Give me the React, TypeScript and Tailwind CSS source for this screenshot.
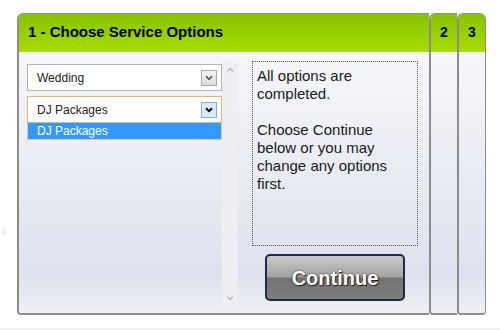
const font = "font-['Liberation_Sans',Arial,sans-serif]";

function Chevron({ bold }: { bold?: boolean }) {
  return (
    <svg width="8" height="6" viewBox="0 0 8 6">
      <path d="M1 1.2 L4 4.2 L7 1.2" stroke={bold ? "#000" : "#444"} strokeWidth={bold ? 2 : 1.6} fill="none" />
    </svg>
  );
}

function Select({ label, active }: { label: string; active?: boolean }) {
  return (
    <div
      className={
        "flex h-[27px] items-center justify-between bg-white pl-[9px] pr-[4px] text-[12px] text-[#222] border " +
        (active ? "border-[#e2b873]" : "border-[#b4b4b4]")
      }
    >
      <span>{label}</span>
      <div
        className={
          "flex h-[16px] w-[16px] items-center justify-center border " +
          (active ? "border-[#7eaee0] bg-[#dcebfc]" : "border-[#a8a8a8] bg-gradient-to-b from-[#f4f4f4] to-[#dcdcdc]")
        }
      >
        <Chevron bold={active} />
      </div>
    </div>
  );
}

function Tab({ n, last }: { n: string; last?: boolean }) {
  return (
    <div
      className={
        "flex w-[28px] flex-col overflow-hidden border-l-2 border-t border-b-2 border-[#8c8c8c] rounded-tl-[6px] rounded-bl-[4px] " +
        (last ? "w-[29px] border-r rounded-tr-[6px] rounded-br-[4px]" : "")
      }
    >
      <div className="flex h-[38px] items-center justify-center bg-gradient-to-b from-[#86c200] to-[#a8dd00] pb-[1px] text-[14px] font-bold text-black">
        {n}
      </div>
      <div className="flex-1 bg-gradient-to-b from-[#f6f7f9] via-[#dfe2ee] via-85% to-[#eef0f4]" />
    </div>
  );
}

export default function App() {
  return (
    <div className={`relative h-[330px] w-[500px] bg-white ${font}`}>
      <span className="absolute left-0 top-[224px] text-[10px] text-[#e4dcd6]">⇩</span>
      <div className="flex pl-[17px] pt-[13px]">
        <div className="flex h-[302px] w-[412px] flex-col overflow-hidden border-l-2 border-t border-b-2 border-[#8c8c8c] rounded-tl-[6px] rounded-bl-[4px]">
          <div className="flex h-[38px] items-center bg-gradient-to-b from-[#86c200] to-[#a8dd00] pl-[9px] pb-[1px] text-[15px] font-bold text-black">
            1 - Choose Service Options
          </div>
          <div className="flex flex-1 bg-gradient-to-b from-[#f6f7f9] via-[#dfe2ee] via-85% to-[#eef0f4] pt-[9px] pl-[8px]">
            <div className="flex w-[195px] flex-col pt-[3px]">
              <Select label="Wedding" />
              <div className="mt-[5px]">
                <Select label="DJ Packages" active />
              </div>
              <div className="border border-t-0 border-[#c8cad2] bg-[#3399ff] pl-[9px] h-[17px] text-[12px] leading-[16px] text-white">
                DJ Packages
              </div>
            </div>
            <div className="flex h-[246px] w-[16px] flex-col items-center justify-between bg-[#eeeff3] py-[6px]">
              <svg width="8" height="6" viewBox="0 0 8 6">
                <path d="M1 4.5 L4 1.5 L7 4.5" stroke="#b8b8b8" strokeWidth="1.4" fill="none" />
              </svg>
              <svg width="8" height="6" viewBox="0 0 8 6">
                <path d="M1 1.5 L4 4.5 L7 1.5" stroke="#b8b8b8" strokeWidth="1.4" fill="none" />
              </svg>
            </div>
            <div className="ml-[14px] flex w-[166px] flex-col items-center">
              <div className="h-[185px] w-full border border-dotted border-[#555] px-[4px] pt-[5px] text-[15px] leading-[18px] text-[#1a1a1a]">
                All options are
                <br />
                completed.
                <br />
                <br />
                Choose Continue
                <br />
                below or you may
                <br />
                change any options
                <br />
                first.
              </div>
              <button className="mt-[8px] h-[47px] w-[140px] rounded-[5px] border-2 border-[#1f2a47] bg-[linear-gradient(to_bottom,#cacaca_0%,#a3a3a3_48%,#747474_52%,#7c7c7c_100%)] text-[20px] font-bold text-white [text-shadow:0_0_2px_#222,1px_1px_1px_#222]">
                Continue
              </button>
            </div>
          </div>
        </div>
        <Tab n="2" />
        <Tab n="3" last />
      </div>
      <div className="absolute bottom-0 left-0 h-[2px] w-full bg-[#eef1f5]" />
    </div>
  );
}
